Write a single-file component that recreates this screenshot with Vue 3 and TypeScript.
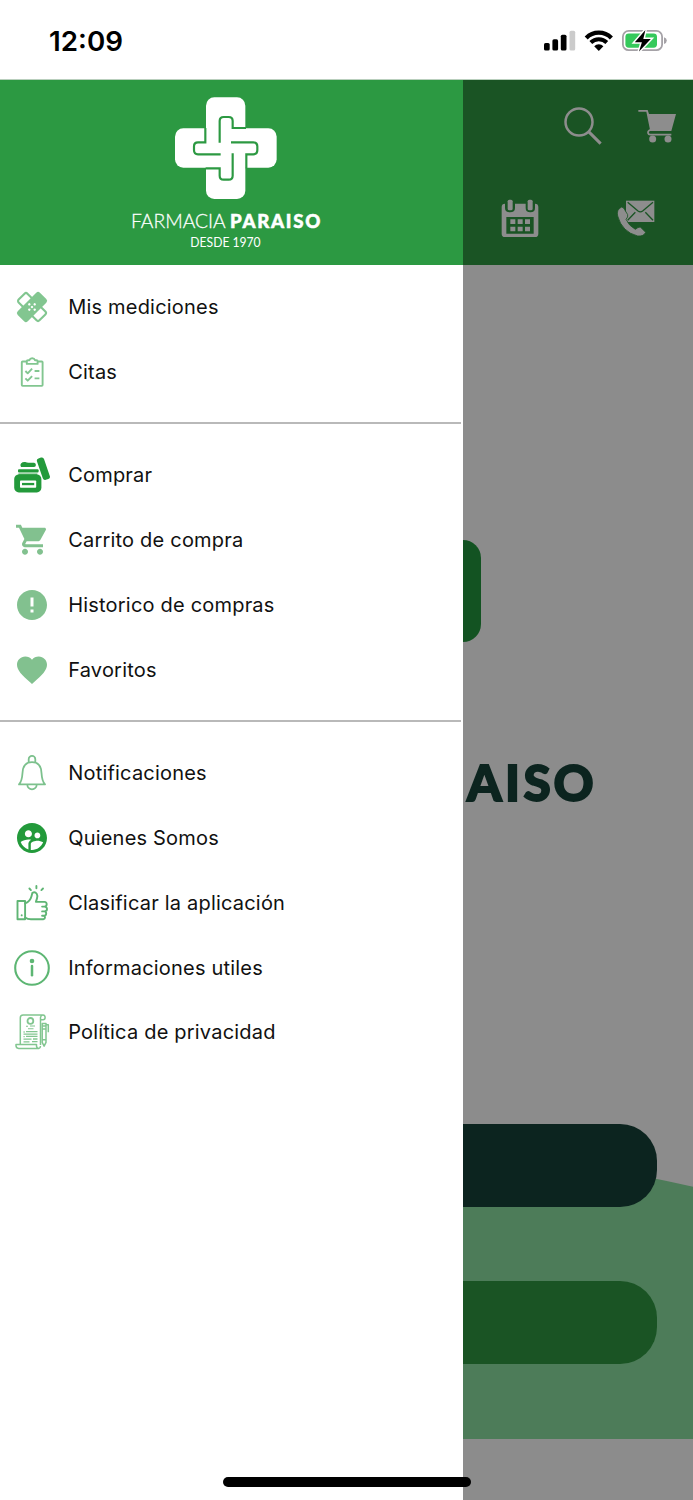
<script setup lang="ts">
interface MenuItem {
  id: string
  label: string
}

const groups: MenuItem[][] = [
  [
    { id: 'bandage', label: 'Mis mediciones' },
    { id: 'clipboard', label: 'Citas' },
  ],
  [
    { id: 'jar', label: 'Comprar' },
    { id: 'cart', label: 'Carrito de compra' },
    { id: 'history', label: 'Historico de compras' },
    { id: 'heart', label: 'Favoritos' },
  ],
  [
    { id: 'bell', label: 'Notificaciones' },
    { id: 'people', label: 'Quienes Somos' },
    { id: 'thumb', label: 'Clasificar la aplicación' },
    { id: 'info', label: 'Informaciones utiles' },
    { id: 'policy', label: 'Política de privacidad' },
  ],
]
</script>

<template>
  <div class="phone">
    <header class="status">
      <svg class="clock" viewBox="0 0 90 44"><text x="4" y="31.4" textLength="74" lengthAdjust="spacingAndGlyphs">12:09</text></svg>
      <svg class="signals" viewBox="0 0 126 28">
        <rect x="2" y="16" width="5.7" height="7.6" rx="1.6" />
        <rect x="10.4" y="12.3" width="5.7" height="11.3" rx="1.6" />
        <rect x="18.800" y="7.7" width="5.7" height="15.9" rx="1.6" />
        <rect x="27.500" y="3.7" width="5.7" height="19.9" rx="1.6" fill="#cbcbcb" />
        <g fill="none" stroke="#000">
          <path d="M44.200 10.900a17.800 17.800 0 0 1 25.200 0" stroke-width="4.300" />
          <path d="M48.800 15.500a11.300 11.300 0 0 1 16 0" stroke-width="3.900" />
        </g>
        <path d="M52.200 19.200a6.500 6.500 0 0 1 9.200 0L56.800 23.900z" />
        <rect x="80.900" y="3.900" width="39.200" height="19.300" rx="5.800" fill="none" stroke="#a5a2a7" stroke-width="1.800" />
        <rect x="83.400" y="6.400" width="31.600" height="14.300" rx="3.400" fill="#35c95b" />
        <path d="M122 10.200q2.800 1 2.800 3.400t-2.800 3.400z" fill="#a5a2a7" />
        <path d="M103.400 3 92.800 15.200h7.100l-2.900 9.200 11.800-12.400h-7.500z" stroke="#fff" stroke-width="3" />
        <path d="M103.400 3 92.800 15.200h7.100l-2.900 9.200 11.800-12.400h-7.500z" />
      </svg>
    </header>

    <main class="body">
      <nav class="drawer">
        <div class="brand">
          <svg class="logo" viewBox="0 0 660 540">
            <g fill="#fff">
              <rect x="258" y="37" width="118" height="305" rx="25" />
              <rect x="165" y="130" width="305" height="118" rx="25" />
            </g>
            <g fill="none" stroke="#2c9942" stroke-width="6.5">
              <path d="M299 173V108q0-12 12-12h15q12 0 12 12v21h40" />
              <path d="M333 172h67q12 0 12 12v12q0 12-12 12h-21v42" />
              <path d="M338 205v67q0 12-12 12h-15q-12 0-12-12v-22h-42" />
              <path d="M302 208h-68q-12 0-12-12v-12q0-12 12-12h22v-43" />
            </g>
            <g fill="#fff">
              <text class="thin" x="33" y="429" textLength="284" lengthAdjust="spacingAndGlyphs">FARMACIA</text>
              <text class="black" x="330" y="429" textLength="271" lengthAdjust="spacing">PARAISO</text>
              <text class="since" x="211" y="487" textLength="211" lengthAdjust="spacingAndGlyphs">DESDE 1970</text>
            </g>
          </svg>
        </div>

        <div class="groups">
          <ul v-for="(group, g) in groups" :key="g" class="group">
            <li v-for="item in group" :key="item.id" class="item">
              <svg class="icon" viewBox="0 0 36 36">
                <g v-if="item.id === 'bandage'" transform="rotate(45 18 18)">
                  <rect x="3.300" y="11.800" width="29.400" height="12.400" rx="2" fill="#fff" stroke="#82c690" stroke-width="2.100" />
                  <rect x="10.900" y="2.300" width="14.200" height="31.400" rx="2.600" fill="#82c690" />
                  <g fill="#fff">
                    <circle cx="18" cy="14.200" r="1.200" /><circle cx="18" cy="21.800" r="1.200" />
                    <circle cx="14.200" cy="18" r="1.200" /><circle cx="21.800" cy="18" r="1.200" />
                    <circle cx="18" cy="18" r="1.200" />
                  </g>
                </g>
                <g v-else-if="item.id === 'clipboard'" fill="none" stroke="#82c690" stroke-width="1.900" stroke-linejoin="round">
                  <rect x="7.8" y="7.5" width="20.8" height="24.4" rx="0.8" />
                  <path d="M12.800 9.900V7.400q0-1.200 1.200-1.200h1.400q.6-2 2.800-2t2.800 2h1.400q1.200 0 1.200 1.200v2.500z" fill="#fff" />
                  <path d="M11.4 17l2.3 2.3 4.4-4.600M11.4 24.400l2.3 2.3 4.400-4.600M20.6 17h4.800M20.6 24.4h4.800" />
                </g>
                <g v-else-if="item.id === 'jar'" fill="#239a3b">
                  <rect x="0.2" y="17.4" width="27.2" height="18" rx="4.6" />
                  <rect x="4" y="12.2" width="20.6" height="3.4" rx="1" />
                  <path d="M4.4 17.8h19V16.6h-19z" />
                  <path d="M7 10q-1.3-2.2 0-3.6 1.8-1.7 4.3-1.3 1.6.7 3.2.7h5.6q1.8.2 1.8 2.1T20 10z" />
                  <rect x="25.7" y="0.4" width="7.4" height="22.6" rx="2.4" transform="rotate(-19 29.4 11.7)" />
                  <rect x="6" y="23.4" width="16.2" height="7.4" rx="0.8" fill="#fff" />
                  <rect x="8" y="25.9" width="12.2" height="2.3" />
                </g>
                <path v-else-if="item.id === 'cart'" fill="#82c18f" transform="translate(.5 -.3) scale(1.5)" d="M7 18c-1.1 0-1.99.9-1.99 2S5.9 22 7 22s2-.9 2-2-.9-2-2-2zM1 2v2h2l3.6 7.59-1.35 2.45c-.16.28-.25.61-.25.96 0 1.1.9 2 2 2h12v-2H7.42c-.14 0-.25-.11-.25-.25l.03-.12.9-1.63h7.45c.75 0 1.41-.41 1.75-1.03l3.58-6.49c.08-.14.12-.31.12-.48 0-.55-.45-1-1-1H5.21l-.94-2H1zm16 16c-1.1 0-1.99.9-1.99 2s.89 2 1.99 2 2-.9 2-2-.9-2-2-2z" />
                <path v-else-if="item.id === 'history'" fill="#82c18f" transform="scale(1.5)" d="M12 2C6.48 2 2 6.48 2 12s4.48 10 10 10 10-4.48 10-10S17.52 2 12 2zm1 15h-2v-2h2v2zm0-4h-2V7h2v6z" />
                <path v-else-if="item.id === 'heart'" fill="#82c18f" transform="scale(1.5)" d="M12 21.35l-1.45-1.32C5.4 15.36 2 12.28 2 8.5 2 5.42 4.42 3 7.5 3c1.74 0 3.41.81 4.5 2.09C13.09 3.81 14.76 3 16.5 3 19.58 3 22 5.42 22 8.5c0 3.78-3.4 6.86-8.55 11.54L12 21.35z" />
                <g v-else-if="item.id === 'bell'" fill="none" stroke="#7cc18d" stroke-width="1.8" stroke-linejoin="round">
                  <path d="M5 29.4c2.8-3 3.2-6.4 3.5-11.4C8.800 10.800 12.600 7.200 18 7.200S27.200 10.800 27.500 18c.3 5 .7 8.400 3.500 11.400z" />
                  <path d="M14.700 7.600V4.200a3.300 3.300 0 0 1 6.600 0v3.400M13.300 29.600a4.700 4.700 0 0 0 9.400 0" />
                </g>
                <path v-else-if="item.id === 'people'" fill="#239a3b" transform="scale(1.5)" d="M11.99 2c-5.52 0-10 4.48-10 10s4.48 10 10 10 10-4.48 10-10-4.48-10-10-10zm3.61 6.34c1.07 0 1.93.86 1.93 1.93 0 1.07-.86 1.93-1.93 1.93-1.07 0-1.93-.86-1.93-1.93-.01-1.07.86-1.93 1.93-1.93zm-6-1.58c1.3 0 2.36 1.06 2.36 2.36 0 1.3-1.06 2.36-2.36 2.36s-2.36-1.06-2.36-2.36c0-1.31 1.05-2.36 2.36-2.36zm0 9.13v3.75c-2.4-.75-4.3-2.6-5.14-4.96 1.05-1.12 3.67-1.69 5.14-1.69.53 0 1.2.08 1.9.22-1.64.87-1.9 2.02-1.9 2.68zM11.99 20c-.27 0-.53-.01-.79-.04v-4.07c0-1.42 2.94-2.13 4.4-2.13 1.07 0 2.92.39 3.84 1.15-1.17 2.97-4.06 5.09-7.45 5.09z" />
                <g v-else-if="item.id === 'thumb'" fill="none" stroke="#5fb574" stroke-width="1.900" stroke-linejoin="round" stroke-linecap="round">
                  <path d="M3.500 16h7.600v18.300H3.500z" />
                  <path d="M11.100 18.400q5.200-2.200 6.400-7.200l.9-3.400q2.700-1.300 4.300.9 1.200 2 .3 4.700l-1.100 3.500h8.500q2.300.1 2.300 2.300t-2.200 2.400h-2.400 2.400q2.500.1 2.500 2.400t-2.500 2.400h-2.400 2q2.100.1 2.100 2.200t-2.100 2.200h-2 1.400q1.500.2 1.500 1.700t-1.700 1.700H17q-3.500 0-5.900-1.700" />
                  <path d="M22.400 1v2.200M15.400 3.500l1.500 1.600M29 3.500l-1.600 1.600" />
                  <path d="M7.700 30.300v.1" />
                </g>
                <g v-else-if="item.id === 'info'">
                  <circle cx="18" cy="18" r="16.800" fill="none" stroke="#5db673" stroke-width="2.100" />
                  <circle cx="18" cy="11" r="2.3" fill="#5db673" />
                  <path d="M18 15.900v9.400" stroke="#5db673" stroke-width="2.500" stroke-linecap="round" />
                </g>
                <g v-else fill="none" stroke="#82c690" stroke-width="1.500" stroke-linejoin="round">
                  <path d="M6.300 30V4q0-2.900 2.800-2.900h20q2 .3 2 2.500t-2 2.200h-2.600V31M26.500 5.600V3.500q.3-2.200 2.300-2.400" />
                  <path d="M2 30.400h20.500v1.800q.4 2.200 2.300 2.200H4.700Q2 34.200 2 31.800zM24.800 34.400q1.700-.3 1.700-2.400" />
                  <circle cx="16.400" cy="6.900" r="2.900" stroke-width="1.800" />
                  <path d="M12 12.300h2M16 12h5M14 14.700h5.500" stroke-width="1.100" />
                  <path d="M9.500 18h1.200M12 17.600h11.500M9.500 20.200h14M9.500 22.600h1.200M12 22.400h11.500M9.500 25.200h8M19 25h4.500M9.500 27.800h6M18 27.600h5.500" stroke-width="1.300" />
                  <path d="M28.200 12v16.400l1.900 3.800 1.900-3.800V12zM28.200 12V9.500h3.800V12M32 10.700h2.300v7.500M28.200 15h3.800M28.200 25.800h3.800" />
                </g>
              </svg>
              <span class="label">{{ item.label }}</span>
            </li>
          </ul>
        </div>
      </nav>

      <section class="page">
        <div class="toolbar">
          <div class="tools top">
            <svg class="tool" viewBox="252 80 114 114">
              <circle cx="297" cy="125" r="40.500" fill="none" stroke="#8d8d8d" stroke-width="7.500" />
              <path d="M325 153l37 37" stroke="#8d8d8d" stroke-width="9" />
            </svg>
            <svg class="tool" viewBox="473 80 114 114" fill="#8d8d8d">
              <path d="M474 89h28l4 12h81l-14 51h-65l-2-4h3l-11-54h-24z" />
              <path d="M510 149q-8 2-7 9 1 5 7 5h63" fill="none" stroke="#8d8d8d" stroke-width="5" />
              <circle cx="517" cy="176" r="10.500" /><circle cx="563" cy="176" r="10.500" />
            </svg>
          </div>
          <div class="tools">
            <svg class="tool" viewBox="64 357 114 114" fill="#8d8d8d">
              <path fill-rule="evenodd" d="M76 371q-10 0-10 10v80q0 10 10 10h90q10 0 10-10v-80q0-10-10-10v13q0 13-14 13t-14-13v-13h-32v13q0 13-15 13t-15-13zM80 411h82v50H80z" />
              <rect x="84" y="359" width="15" height="32" rx="5" /><rect x="144" y="359" width="15" height="32" rx="5" />
              <path d="M92 418h15v14H92zM114 418h15v14h-15zM136 418h15v14h-15zM92 440h15v14H92zM114 440h15v14h-15zM136 440h15v14h-15z" />
            </svg>
            <svg class="tool" viewBox="411 357 114 114" fill="#8d8d8d">
              <path d="M438 362h85v64h-85z" />
              <path d="M443 367l31 26q7 5 14 0l31-26M443 421l23-24M519 421l-23-24" fill="none" stroke="#1a5424" stroke-width="4" />
              <path d="M425 381q-17 8-12 27 13 48 60 60 18 2 24-11l-16-16q-7 0-15 7-20-11-28-30 7-7 5-14l-9-15q-3-7-9-8z" stroke="#1a5424" stroke-width="2.500" />
            </svg>
          </div>
        </div>
        <div class="content">
          <svg class="hill" viewBox="0 0 231 294"><path d="M0 5Q108 14 231 42V294H0z" fill="#4d7c59" /></svg>
          <div class="cross-arm"></div>
          <svg class="wordmark" viewBox="0 0 150 80"><text x="4 42 60.500 90.500" y="58">AISO</text></svg>
          <div class="pill navy"></div>
          <div class="pill green"></div>
        </div>
      </section>
    </main>
    <div class="home-bar"></div>
  </div>
</template>

<style>
body {
  margin: 0;
}
</style>

<style scoped>
.phone {
  position: relative;
  width: 693px;
  height: 1500px;
  overflow: hidden;
  background: #fff;
  font-family: Inter, "Liberation Sans", sans-serif;
}
svg {
  display: block;
  flex: none;
}
.status {
  box-sizing: border-box;
  height: 80px;
  display: flex;
  justify-content: space-between;
  align-items: flex-start;
  padding: 20px 25px 0 45px;
  border-bottom: 1px solid #b9cfbd;
}
.clock {
  width: 90px;
  height: 44px;
  font-size: 27.500px;
  font-weight: 600;
}
.signals {
  width: 126px;
  height: 28px;
  margin-top: 7px;
}
.body {
  display: flex;
  height: 1420px;
}
.drawer {
  width: 462.500px;
  flex: none;
  background: #fff;
}
.brand {
  height: 185px;
  background: #2c9942;
}
.logo {
  width: 220px;
  height: 180px;
  padding: 5px 0 0 120px;
}
.logo text {
  font-family: Lato, sans-serif;
  font-size: 57px;
}
.logo .thin {
  font-weight: 300;
  stroke: #fff;
  stroke-width: 0.8px;
}
.logo .black {
  font-weight: 900;
  font-size: 56px;
  stroke: #fff;
  stroke-width: 1.500px;
}
.logo .since {
  font-size: 39px;
  font-weight: 400;
}
.groups {
  padding-top: 9.500px;
}
.group {
  list-style: none;
  margin: 0;
  padding: 0;
}
.group + .group {
  margin-top: 18px;
  padding-top: 18.800px;
  border-top: 2px solid #b9b9b9;
  margin-right: 2px;
}
.item {
  height: 64.800px;
  display: flex;
  align-items: center;
  gap: 18.200px;
  padding-left: 14px;
}
.icon {
  width: 36px;
  height: 36px;
}
.label {
  font-size: 20px;
  line-height: 26px;
  letter-spacing: 0.200px;
  color: #111;
  white-space: nowrap;
}
.page {
  flex: 1;
  min-width: 0;
  background: #8c8c8c;
}
.toolbar {
  box-sizing: border-box;
  height: 185px;
  background: #1a5424;
  padding-top: 26.700px;
}
.tools {
  display: flex;
  gap: 77.700px;
  padding-left: 38.800px;
}
.tools.top {
  gap: 35.700px;
  padding: 0 0 54.300px 101.500px;
}
.tool {
  width: 38px;
  height: 38px;
}
.content {
  position: relative;
  height: 1235px;
  box-sizing: border-box;
  padding-top: 275px;
}
.hill {
  position: absolute;
  left: 0;
  top: 880px;
  width: 231px;
  height: 294px;
}
.cross-arm {
  width: 18.500px;
  height: 101.500px;
  border-radius: 0 22px 22px 0;
  background: #135322;
}
.wordmark {
  width: 150px;
  height: 80px;
  margin-top: 101.500px;
  font-family: Lato, sans-serif;
  font-size: 49.500px;
  font-weight: 900;
  fill: #0c241f;
  stroke: #0c241f;
  stroke-width: 1.800px;
}
.pill {
  position: relative;
  width: 194.500px;
  height: 83.300px;
  border-radius: 0 37px 37px 0;
}
.navy {
  margin-top: 300.700px;
  background: #0c241f;
}
.green {
  margin-top: 74.200px;
  background: #1a5424;
}
.home-bar {
  position: absolute;
  left: 223px;
  top: 1477px;
  width: 248px;
  height: 9.500px;
  border-radius: 5px;
  background: #000;
}
</style>
